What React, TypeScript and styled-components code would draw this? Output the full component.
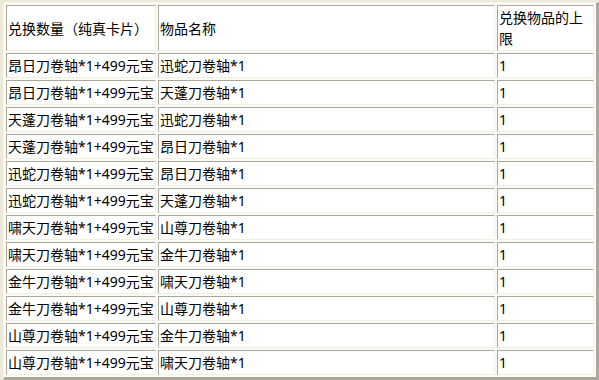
import React from "react";
import styled, { createGlobalStyle } from "styled-components";

const GlobalStyle = createGlobalStyle`
  html, body {
    margin: 0;
    padding: 0;
    background: #ece9d8;
  }
  body {
    padding: 2px 0 0 3px;
    font-family: "Noto Sans", "Noto Sans CJK SC", sans-serif;
    font-size: 14px;
    color: #000;
  }
`;

const Table = styled.table`
  box-sizing: border-box;
  width: 596px;
  table-layout: fixed;
  border-collapse: separate;
  border-spacing: 2px;
  background: #fbfaf6;
  border-style: solid;
  border-width: 1px 3px 4px 1px;
  border-color: #f6f5ee #aca899 #aca899 #f6f5ee;
`;

const Cell = styled.td<{ $w?: number; $wrap?: boolean }>`
  box-sizing: border-box;
  ${(p) => (p.$w ? `width: ${p.$w}px;` : "")}
  height: 25px;
  padding: 1px;
  border: 1px solid;
  border-color: #aca899 #f1efe2 #f1efe2 #aca899;
  background: #fff;
  line-height: 21px;
  text-align: left;
  vertical-align: middle;
  white-space: ${(p) => (p.$wrap ? "normal" : "nowrap")};
  overflow: hidden;
`;

type Row = [string, string, string];

const rows: Row[] = [
  ["昂日刀卷轴*1+499元宝", "迅蛇刀卷轴*1", "1"],
  ["昂日刀卷轴*1+499元宝", "天蓬刀卷轴*1", "1"],
  ["天蓬刀卷轴*1+499元宝", "迅蛇刀卷轴*1", "1"],
  ["天蓬刀卷轴*1+499元宝", "昂日刀卷轴*1", "1"],
  ["迅蛇刀卷轴*1+499元宝", "昂日刀卷轴*1", "1"],
  ["迅蛇刀卷轴*1+499元宝", "天蓬刀卷轴*1", "1"],
  ["啸天刀卷轴*1+499元宝", "山尊刀卷轴*1", "1"],
  ["啸天刀卷轴*1+499元宝", "金牛刀卷轴*1", "1"],
  ["金牛刀卷轴*1+499元宝", "啸天刀卷轴*1", "1"],
  ["金牛刀卷轴*1+499元宝", "山尊刀卷轴*1", "1"],
  ["山尊刀卷轴*1+499元宝", "金牛刀卷轴*1", "1"],
  ["山尊刀卷轴*1+499元宝", "啸天刀卷轴*1", "1"],
];

export default function App() {
  return (
    <>
      <GlobalStyle />
      <Table>
        <tbody>
          <tr>
            <Cell $w={150}>兑换数量（纯真卡片）</Cell>
            <Cell $w={337}>物品名称</Cell>
            <Cell $w={97} $wrap>
              兑换物品的上限
            </Cell>
          </tr>
          {rows.map((r, i) => (
            <tr key={i}>
              <Cell>{r[0]}</Cell>
              <Cell>{r[1]}</Cell>
              <Cell>{r[2]}</Cell>
            </tr>
          ))}
        </tbody>
      </Table>
    </>
  );
}
